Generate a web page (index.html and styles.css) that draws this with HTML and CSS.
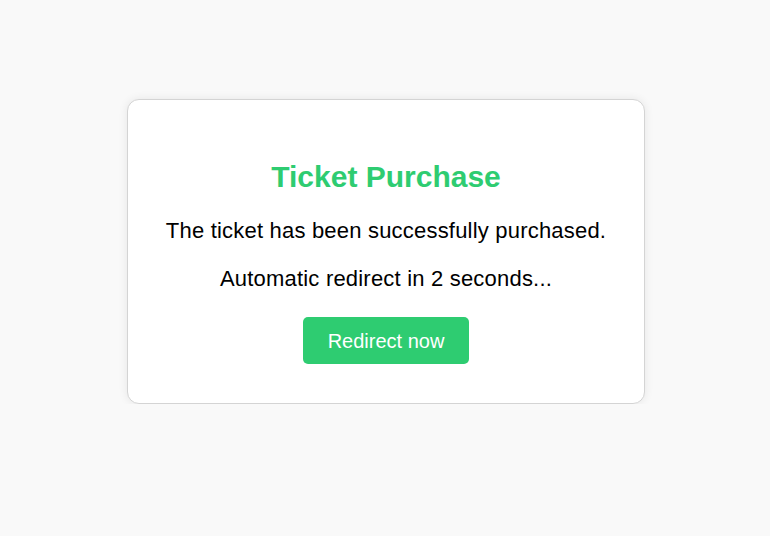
FILE: index.html
```html
<!DOCTYPE html>
<html lang="en">
<head>
<meta charset="utf-8">
<title>Ticket Purchase</title>
<link rel="stylesheet" href="styles.css">
</head>
<body>
<div class="page">
  <div class="card">
    <h2 class="title">Ticket Purchase</h2>
    <p class="message">The ticket has been successfully purchased.</p>
    <p class="message countdown">Automatic redirect in 2 seconds...</p>
    <button class="redirect-btn" type="button">Redirect now</button>
  </div>
</div>
</body>
</html>
```

FILE: styles.css
```css
html, body {
  margin: 0;
  padding: 0;
}
body {
  background: #f9f9f9;
  font-family: "Liberation Sans", Arial, sans-serif;
  color: #000;
}
.page {
  display: flex;
  justify-content: center;
  padding: 99px 0 0 2px;
}
.card {
  box-sizing: border-box;
  width: 518px;
  background: #fff;
  border: 1px solid #d4d4d4;
  border-radius: 12px;
  box-shadow: 0 0 10px rgba(0, 0, 0, 0.08);
  padding: 60px 20px 39px;
  display: flex;
  flex-direction: column;
  align-items: center;
  text-align: center;
}
.title {
  margin: 0;
  font-size: 30px;
  line-height: 34px;
  font-weight: bold;
  color: #2ecc71;
}
.message {
  margin: 24px 0 0;
  font-size: 22px;
  line-height: 26px;
  letter-spacing: 0.2px;
}
.countdown {
  margin-top: 22px;
}
.redirect-btn {
  margin-top: 25px;
  font-family: inherit;
  font-size: 20px;
  line-height: 24px;
  padding: 12px 25px 11px;
  white-space: nowrap;
  border: none;
  border-radius: 5px;
  background: #2ecc71;
  color: #fff;
  cursor: pointer;
}
```
